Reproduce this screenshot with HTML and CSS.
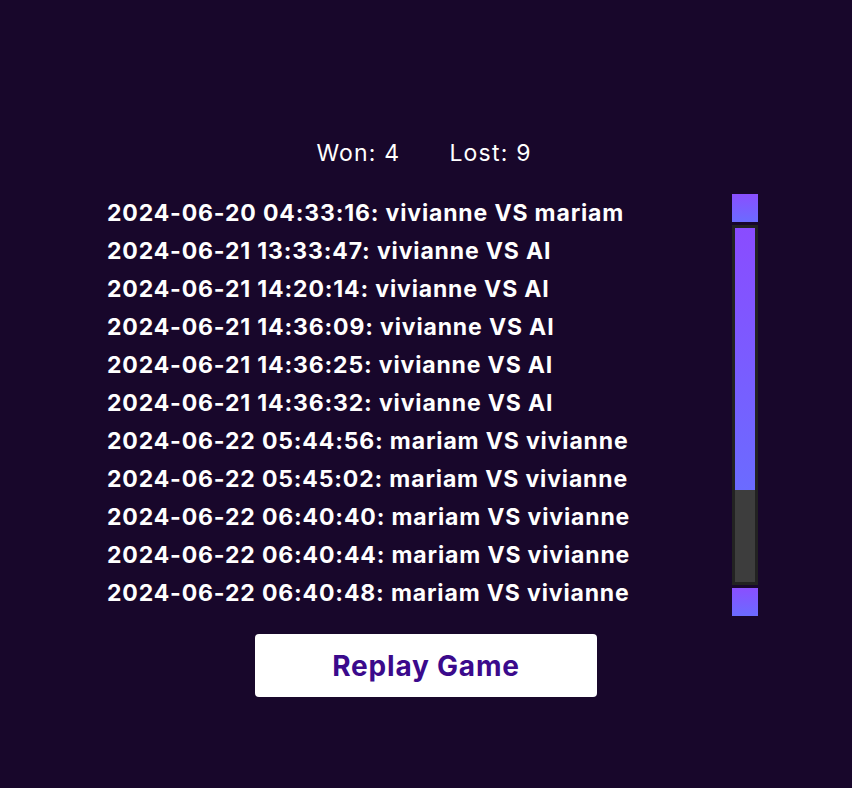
FILE: index.html
```html
<!DOCTYPE html>
<html>
<head>
<meta charset="utf-8">
<link rel="stylesheet" href="styles.css">
</head>
<body>
<main class="page">
  <div class="stats">
    <span>Won: 4</span>
    <span>Lost: 9</span>
  </div>
  <div class="history-box">
    <ul class="history">
      <li>2024-06-20 04:33:16: vivianne VS mariam</li>
      <li>2024-06-21 13:33:47: vivianne VS AI</li>
      <li>2024-06-21 14:20:14: vivianne VS AI</li>
      <li>2024-06-21 14:36:09: vivianne VS AI</li>
      <li>2024-06-21 14:36:25: vivianne VS AI</li>
      <li>2024-06-21 14:36:32: vivianne VS AI</li>
      <li>2024-06-22 05:44:56: mariam VS vivianne</li>
      <li>2024-06-22 05:45:02: mariam VS vivianne</li>
      <li>2024-06-22 06:40:40: mariam VS vivianne</li>
      <li>2024-06-22 06:40:44: mariam VS vivianne</li>
      <li>2024-06-22 06:40:48: mariam VS vivianne</li>
      <li>2024-06-22 06:41:02: mariam VS vivianne</li>
      <li>2024-06-22 06:41:15: mariam VS vivianne</li>
      <li>2024-06-22 06:41:30: mariam VS vivianne</li>
    </ul>
    <div class="scrollbar" aria-hidden="true">
      <div class="sb-btn"></div>
      <div class="sb-track"><div class="sb-thumb"></div></div>
      <div class="sb-btn"></div>
    </div>
  </div>
  <button class="replay">Replay Game</button>
</main>
</body>
</html>
```

FILE: styles.css
```css
html, body {
  margin: 0;
  padding: 0;
  background: #18072b;
  height: 100%;
}
body {
  font-family: Inter, "Noto Sans", sans-serif;
  color: #ffffff;
}
.page {
  display: flex;
  flex-direction: column;
  align-items: center;
  padding-top: 139px;
}
.stats {
  display: flex;
  gap: 49px;
  font-size: 23px;
  line-height: 28px;
  letter-spacing: 1.2px;
  padding-right: 4px;
}
.history-box {
  display: flex;
  width: 664px;
  height: 422px;
  margin-top: 27px;
}
.history {
  flex: 1;
  list-style: none;
  margin: 0;
  padding: 0 0 0 13px;
  overflow: hidden;
  font-size: 23px;
  font-weight: 700;
  line-height: 38px;
  letter-spacing: 0.85px;
}
.history li {
  white-space: nowrap;
}
.scrollbar {
  width: 26px;
  display: flex;
  flex-direction: column;
  gap: 3px;
}
.sb-btn {
  height: 28px;
  background: linear-gradient(#8a4fff, #6b6bff);
}
.sb-track {
  flex: 1;
  background: #3d3d3d;
  border: 3px solid #222222;
}
.sb-thumb {
  height: 262px;
  background: linear-gradient(#8a4cff, #6b6bff);
}
.replay {
  margin-top: 18px;
  width: 342px;
  height: 63px;
  background: #ffffff;
  border: none;
  border-radius: 4px;
  font-family: Inter, "Noto Sans", sans-serif;
  font-size: 28px;
  font-weight: 700;
  letter-spacing: 0.8px;
  color: #3b0a8c;
  cursor: pointer;
}
```
